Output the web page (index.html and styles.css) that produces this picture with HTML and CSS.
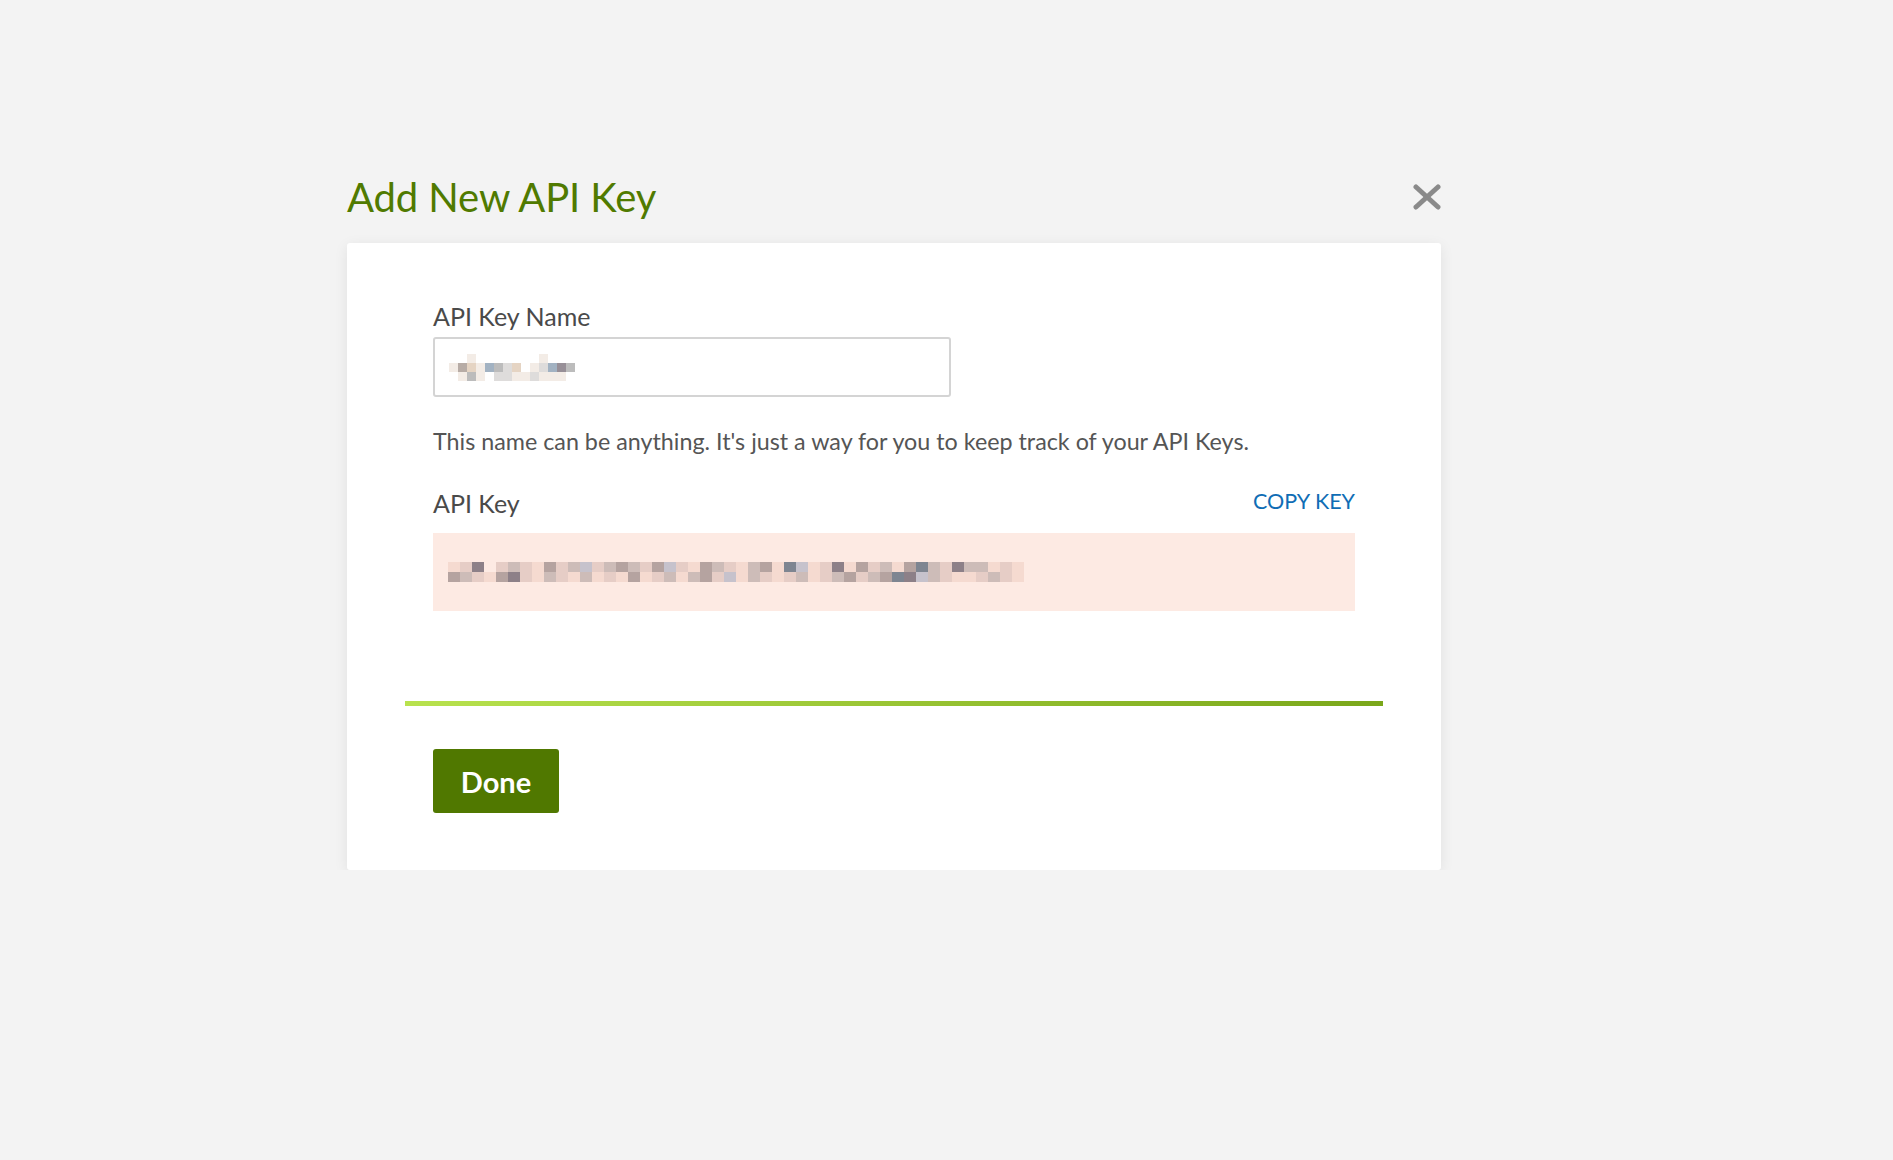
FILE: index.html
```
<!DOCTYPE html>
<html lang="en">
<head>
    <meta charset="UTF-8">
    <meta name="viewport" content="width=device-width, initial-scale=1.0">
    <title>Add New API Key</title>
    <link rel="stylesheet" href="styles.css">
</head>
<body>
    <div class="page">
        <div class="modal">
            <div class="modal-header">
                <h1>Add New API Key</h1>
                <button class="close" type="button" aria-label="Close">
                    <svg width="28" height="26" viewBox="0 0 28 26">
                        <line x1="3" y1="3" x2="25" y2="23" stroke="#8a8a8a" stroke-width="5" stroke-linecap="round"/>
                        <line x1="25" y1="3" x2="3" y2="23" stroke="#8a8a8a" stroke-width="5" stroke-linecap="round"/>
                    </svg>
                </button>
            </div>

            <div class="card">
                <label for="keyName">API Key Name</label>
                <div class="input">
                    <div class="mosaic small">
                        <div class="row"><i></i><i></i><i class="c1"></i><i></i><i></i><i></i><i></i><i></i><i></i><i></i><i class="c1"></i><i></i><i></i><i></i><i></i></div>
                        <div class="row"><i class="c1"></i><i class="c3"></i><i class="c4"></i><i class="c1"></i><i class="c6"></i><i class="c7"></i><i class="c2"></i><i class="c4"></i><i></i><i class="c1"></i><i class="c2"></i><i class="c6"></i><i class="c5"></i><i class="c7"></i></div>
                        <div class="row"><i></i><i class="c1"></i><i class="c7"></i><i class="c1"></i><i></i><i class="c2"></i><i class="c2"></i><i class="c1"></i><i class="c1"></i><i class="c2"></i><i class="c1"></i><i class="c1"></i><i class="c1"></i></div>
                    </div>
                </div>
                <p class="help">This name can be anything. It's just a way for you to keep track of your API Keys.</p>

                <div class="key-head">
                    <span class="key-label">API Key</span>
                    <a href="#" class="copy">COPY KEY</a>
                </div>
                <div class="key-box">
                    <div class="mosaic">
                        <div class="row"><i class="p1"></i><i class="p2"></i><i class="p5"></i><i></i><i class="p2"></i><i class="p3"></i><i class="p2"></i><i class="p1"></i><i class="p4"></i><i class="p2"></i><i class="p3"></i><i class="p6"></i><i class="p2"></i><i class="p3"></i><i class="p4"></i><i class="p3"></i><i class="p2"></i><i class="p4"></i><i class="p6"></i><i class="p2"></i><i class="p1"></i><i class="p4"></i><i class="p3"></i><i class="p2"></i><i class="p1"></i><i class="p3"></i><i class="p4"></i><i class="p1"></i><i class="p7"></i><i class="p6"></i><i class="p1"></i><i class="p2"></i><i class="p5"></i><i class="p1"></i><i class="p4"></i><i class="p2"></i><i class="p3"></i><i class="p1"></i><i class="p4"></i><i class="p7"></i><i class="p3"></i><i class="p2"></i><i class="p5"></i><i class="p3"></i><i class="p3"></i><i class="p1"></i><i class="p2"></i><i class="p1"></i></div>
                        <div class="row"><i class="p4"></i><i class="p3"></i><i class="p2"></i><i class="p1"></i><i class="p4"></i><i class="p5"></i><i class="p2"></i><i class="p1"></i><i class="p3"></i><i class="p2"></i><i class="p1"></i><i class="p3"></i><i class="p1"></i><i class="p2"></i><i class="p1"></i><i class="p4"></i><i class="p1"></i><i class="p2"></i><i class="p3"></i><i class="p1"></i><i class="p3"></i><i class="p4"></i><i class="p2"></i><i class="p6"></i><i class="p1"></i><i class="p3"></i><i class="p2"></i><i class="p1"></i><i class="p2"></i><i class="p3"></i><i class="p1"></i><i class="p2"></i><i class="p3"></i><i class="p4"></i><i class="p2"></i><i class="p3"></i><i class="p4"></i><i class="p7"></i><i class="p5"></i><i class="p6"></i><i class="p3"></i><i class="p2"></i><i class="p1"></i><i class="p1"></i><i class="p2"></i><i class="p3"></i><i class="p2"></i><i class="p1"></i></div>
                    </div>
                </div>

                <div class="divider"></div>

                <button type="button" class="done">Done</button>
            </div>
        </div>
    </div>
</body>
</html>
```

FILE: styles.css
```
body {
    margin: 0;
    background-color: #f3f3f3;
    font-family: 'Lato', 'Open Sans', sans-serif;
    color: #4a4a4a;
}

.page {
    padding: 173px 0 0 347px;
}

.modal {
    width: 1094px;
}

.modal-header {
    display: flex;
    justify-content: space-between;
    align-items: center;
    margin-bottom: 22px;
}

.modal-header h1 {
    margin: 0;
    font-size: 40px;
    line-height: 48px;
    font-weight: 400;
    color: #507a00;
    letter-spacing: -0.1px;
}

.close {
    border: none;
    background: none;
    padding: 0;
    cursor: pointer;
    display: flex;
}

/* Card */
.card {
    background-color: #fff;
    border-radius: 3px;
    box-shadow: 0 3px 14px rgba(0, 0, 0, 0.08);
    padding: 59px 86px 57px;
}

label {
    display: block;
    font-size: 25px;
    line-height: 29px;
    color: #4a4a4a;
    margin-bottom: 6px;
}

.input {
    width: 518px;
    height: 60px;
    box-sizing: border-box;
    border: 2px solid #d4d4d4;
    border-radius: 3px;
    display: flex;
    align-items: center;
    padding-left: 14px;
}

.help {
    margin: 31px 0 0;
    font-size: 23.3px;
    line-height: 27px;
    color: #555;
}

.key-head {
    display: flex;
    justify-content: space-between;
    align-items: center;
    margin-top: 34px;
}

.key-label {
    font-size: 25px;
    line-height: 29px;
}

.copy {
    font-size: 21.5px;
    color: #0f6db5;
    text-decoration: none;
    margin-top: -6px;
}

.key-box {
    margin-top: 15px;
    height: 78px;
    background-color: #fdeae3;
    display: flex;
    align-items: center;
    padding-left: 15px;
}

/* pixelated (redacted) values */
.mosaic .row {
    display: flex;
}

.mosaic i {
    display: block;
    width: 12px;
    height: 10px;
}

.mosaic.small i {
    width: 9px;
    height: 9px;
}

.c1 { background: #f3ece6; }
.c2 { background: #dedcdb; }
.c3 { background: #b7aca6; }
.c4 { background: #e5d4c3; }
.c5 { background: #978f97; }
.c6 { background: #a2b2c2; }
.c7 { background: #bcbcbc; }

.p1 { background: #f5dad0; }
.p2 { background: #e6cdc6; }
.p3 { background: #cdbcb8; }
.p4 { background: #b5a3a0; }
.p5 { background: #8d8088; }
.p6 { background: #c6c2cc; }
.p7 { background: #7e8591; }

.divider {
    margin: 90px -28px 0;
    height: 5px;
    background: linear-gradient(to right, #b8e24e, #7aa71a);
}

.done {
    margin-top: 43px;
    width: 126px;
    height: 64px;
    border: none;
    border-radius: 3px;
    background-color: #507800;
    color: #fff;
    font-family: 'Lato', sans-serif;
    font-size: 29px;
    font-weight: 700;
    cursor: pointer;
}

.done:hover {
    background-color: #456800;
}
```
